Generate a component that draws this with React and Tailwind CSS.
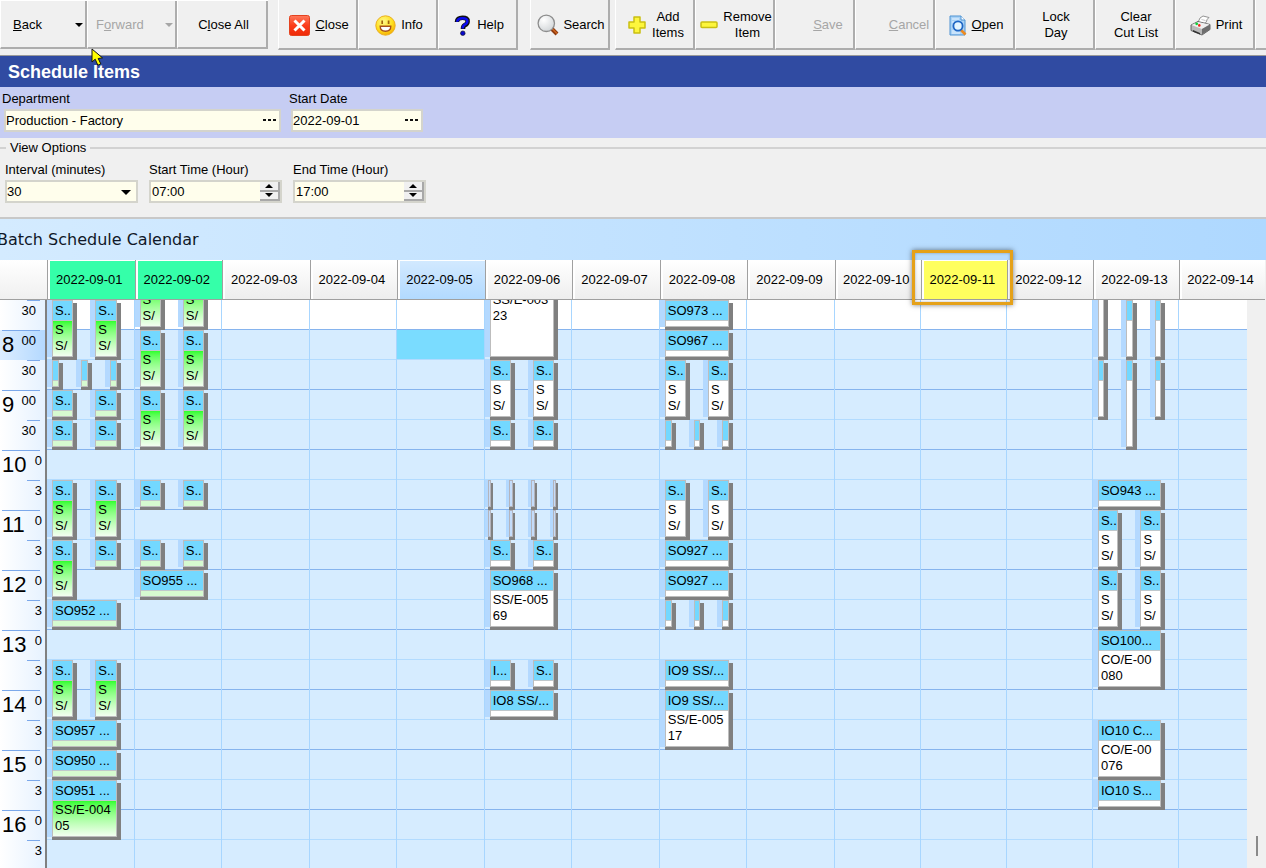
import React from "react";

const DAYS = Array.from({ length: 14 }, (_, i) => `2022-09-${String(i + 1).padStart(2, "0")}`);
const ROWS = Array.from({ length: 20 }, (_, i) => i);
const CALENDAR_GRID =
  "grid grid-cols-[47px_repeat(9,minmax(0,175fr))_repeat(5,minmax(0,172fr))]";

// Each booking: [half-hour row from 07:00, rows spanned, lane, lanes in the slot, title, detail lines]
const S = "S..";
const D = ["S", "S/"];
const EVENTS = {
  1: [
    [1, 2, 0, 2, S, D], [1, 2, 1, 2, S, D],
    [3, 1, 0, 3], [3, 1, 1, 3], [3, 1, 2, 3],
    [4, 1, 0, 2, S], [4, 1, 1, 2, S],
    [5, 1, 0, 2, S], [5, 1, 1, 2, S],
    [7, 2, 0, 2, S, D], [7, 2, 1, 2, S, D],
    [9, 2, 0, 2, S, D], [9, 1, 1, 2, S],
    [11, 1, 0, 1, "SO952 ..."],
    [13, 2, 0, 2, S, D], [13, 2, 1, 2, S, D],
    [15, 1, 0, 1, "SO957 ..."],
    [16, 1, 0, 1, "SO950 ..."],
    [17, 2, 0, 1, "SO951 ...", ["SS/E-004", "05"]],
  ],
  2: [
    [0, 2, 0, 2, "", D], [0, 2, 1, 2, "", D],
    [2, 2, 0, 2, S, D], [2, 2, 1, 2, S, D],
    [4, 2, 0, 2, S, D], [4, 2, 1, 2, S, D],
    [7, 1, 0, 2, S], [7, 1, 1, 2, S],
    [9, 1, 0, 2, S], [9, 1, 1, 2, S],
    [10, 1, 0, 1, "SO955 ..."],
  ],
  6: [
    [0, 3, 0, 1, "", ["SS/E-003", "23"]],
    [3, 2, 0, 2, S, D], [3, 2, 1, 2, S, D],
    [5, 1, 0, 2, S], [5, 1, 1, 2, S],
    [7, 1, 0, 4], [7, 1, 1, 4], [7, 1, 2, 4], [7, 1, 3, 4],
    [8, 1, 0, 4], [8, 1, 1, 4], [8, 1, 2, 4], [8, 1, 3, 4],
    [9, 1, 0, 2, S], [9, 1, 1, 2, S],
    [10, 2, 0, 1, "SO968 ...", ["SS/E-005", "69"]],
    [13, 1, 0, 2, "I..."], [13, 1, 1, 2, S],
    [14, 1, 0, 1, "IO8 SS/..."],
  ],
  8: [
    [1, 1, 0, 1, "SO973 ..."],
    [2, 1, 0, 1, "SO967 ..."],
    [3, 2, 0, 2, S, D], [3, 2, 1, 2, S, D],
    [5, 1, 0, 3], [5, 1, 1, 3], [5, 1, 2, 3],
    [7, 2, 0, 2, S, D], [7, 2, 1, 2, S, D],
    [9, 1, 0, 1, "SO927 ..."],
    [10, 1, 0, 1, "SO927 ..."],
    [11, 1, 0, 3], [11, 1, 1, 3], [11, 1, 2, 3],
    [13, 1, 0, 1, "IO9 SS/..."],
    [14, 2, 0, 1, "IO9 SS/...", ["SS/E-005", "17"]],
  ],
  13: [
    [0, 3, 0, 3], [1, 2, 1, 3], [1, 2, 2, 3],
    [3, 2, 0, 3], [3, 3, 1, 3], [3, 2, 2, 3],
    [7, 1, 0, 1, "SO943 ..."],
    [8, 2, 0, 2, S, D], [8, 2, 1, 2, S, D],
    [10, 2, 0, 2, S, D], [10, 2, 1, 2, S, D],
    [12, 2, 0, 1, "SO100...", ["CO/E-00", "080"]],
    [15, 2, 0, 1, "IO10 C...", ["CO/E-00", "076"]],
    [17, 1, 0, 1, "IO10 S..."],
  ],
};

function Booking({ data, green }) {
  const [row, span, lane, lanes, title, lines] = data;
  const unit = 12 / lanes;
  const place = {
    gridRow: `${row + 1} / span ${span}`,
    gridColumn: `${lane * unit + 1} / span ${unit}`,
  };
  if (lanes === 4) {
    return (
      <div className="z-10 flex min-w-0 pr-[13px]" style={place}>
        <div className="mb-[3px] w-[3px] shrink-0 bg-[#b4d9ff]" />
        <div className="mr-[2px] mb-[3px] min-w-0 flex-1 border border-[#b4b4bc] bg-[#c4dcfa] shadow-[0_3px_0_0_#808080,2px_3px_0_0_#808080]" />
      </div>
    );
  }
  const bodyColour = !green
    ? "bg-white"
    : span > 1
      ? "bg-linear-to-b from-[#2cff2c] to-[#f2fff0]"
      : "bg-[#d6fad0]";
  return (
    <div className="z-10 flex min-w-0 pr-[13px]" style={place}>
      <div className="mb-[3px] w-[5px] shrink-0 bg-[#b4d9ff]" />
      <div className="mr-[4px] mb-[3px] flex min-w-0 flex-1 flex-col overflow-hidden border border-[#bdbdbd] shadow-[0_3px_0_0_#808080,4px_3px_0_0_#808080]">
        <div className="h-5 shrink-0 border-b border-[#c0c8cc] bg-[#73d8ff] pl-[2px] leading-5 whitespace-nowrap">
          {title}
        </div>
        <div className={`flex-1 pt-px pl-[2px] leading-4 whitespace-nowrap ${bodyColour}`}>
          {lines && lines.map((l) => <div key={l}>{l}</div>)}
        </div>
      </div>
    </div>
  );
}

function DayColumn({ day }) {
  const green = day <= 2;
  return (
    <div className="grid grid-cols-12 grid-rows-[repeat(20,30px)] border-r border-[#a8d6ff]">
      {ROWS.map((r) => {
        const fill =
          day === 5 && r === 2 ? "bg-[#7adcff]" : r < 2 ? "bg-white" : "bg-[#d6ecff]";
        const line = r % 2 ? "border-[#86b4ee]" : "border-[#b2dbff]";
        return (
          <div
            key={r}
            className={`border-b ${line} ${fill}`}
            style={{ gridRow: r + 1, gridColumn: "1 / -1" }}
          />
        );
      })}
      {(EVENTS[day] || []).map((e) => (
        <Booking key={`${e[0]}-${e[2]}`} data={e} green={green} />
      ))}
    </div>
  );
}

function TimeRail() {
  return (
    <div className="border-r-2 border-[#808080] bg-linear-to-r from-white to-[#e6f2ff]">
      {ROWS.map((r) => {
        if (r === 0) return <div key={r} className="h-[30px]" />;
        const hour = 7 + Math.floor(r / 2);
        const wide = hour >= 10;
        const half = r % 2 === 1;
        return (
          <div
            key={r}
            className={`flex h-[30px] flex-col ${r === 2 ? "bg-linear-to-r from-[#dcedff] to-[#b4d9ff]" : ""}`}
          >
            <div className={`mr-[5px] h-px shrink-0 bg-[#7ba8ea] ${half ? "ml-[27px]" : "ml-[2px]"}`} />
            <div className={`flex justify-between pl-[2px] ${wide ? "pr-[3px]" : "pr-[9px]"}`}>
              <span className="text-[22px] leading-7">{half ? "" : hour}</span>
              <span className="text-[13px] leading-5">
                {half ? (wide ? "3" : "30") : wide ? "0" : "00"}
              </span>
            </div>
          </div>
        );
      })}
    </div>
  );
}

function ToolButton({ children, className = "w-20", disabled }) {
  return (
    <button
      type="button"
      disabled={disabled}
      className={`flex shrink-0 items-center justify-center border-r-2 border-b-2 border-l border-r-[#adadad] border-b-[#adadad] border-l-white pt-[2px] pl-[3px] leading-4 ${disabled ? "text-[#a6a6a6]" : ""} ${className}`}
    >
      {children}
    </button>
  );
}

const CloseIcon = () => (
  <svg width="21" height="21" viewBox="0 0 21 21" aria-hidden="true">
    <defs>
      <linearGradient id="red" x1="0" y1="0" x2="0" y2="1">
        <stop offset="0" stopColor="#ff7a5c" />
        <stop offset="0.5" stopColor="#fb3d1b" />
        <stop offset="1" stopColor="#ee2a08" />
      </linearGradient>
    </defs>
    <rect x="0.5" y="0.5" width="20" height="20" rx="2" fill="url(#red)" stroke="#e4421f" />
    <path d="M5.5 5.5l10 10M15.5 5.5l-10 10" stroke="#fff" strokeWidth="3" />
  </svg>
);

const SmileIcon = () => (
  <svg width="21" height="21" viewBox="0 0 21 21" aria-hidden="true">
    <defs>
      <radialGradient id="sun" cx="0.4" cy="0.3" r="0.75">
        <stop offset="0" stopColor="#fff98a" />
        <stop offset="0.6" stopColor="#ffe01e" />
        <stop offset="1" stopColor="#f5a800" />
      </radialGradient>
    </defs>
    <circle cx="10.5" cy="10.5" r="9.7" fill="url(#sun)" stroke="#eab020" />
    <path d="M7.2 5.5v3.5M13.6 5.5v3.5" fill="none" stroke="#a0640c" strokeWidth="1.7" />
    <path d="M5.2 11.2h10.6q0 5-5.3 5t-5.3-5z" fill="#fff" stroke="#a8501c" strokeWidth="1.4" />
  </svg>
);

const HelpIcon = () => (
  <svg width="17" height="21" viewBox="0 0 17 21" aria-hidden="true" fill="none">
    <path d="M3 7Q3 2.8 8.5 2.8T13.6 6.5Q13.6 8.8 10.8 10.2Q9 11 9 14" stroke="#111" strokeWidth="4.6" />
    <path d="M3.2 6.8Q3.4 3.2 8.5 3.2T13.3 6.5Q13.2 8.6 10.4 9.8Q8.6 10.8 8.6 13.6" stroke="#0a0af0" strokeWidth="2.6" />
    <circle cx="8.8" cy="18.2" r="2.3" fill="#0a0acc" stroke="#111" strokeWidth="0.6" />
  </svg>
);

const SearchIcon = () => (
  <svg width="22" height="22" viewBox="0 0 22 22" aria-hidden="true">
    <defs>
      <radialGradient id="lens" cx="0.35" cy="0.3" r="0.8">
        <stop offset="0" stopColor="#fff" />
        <stop offset="1" stopColor="#cfd3d6" />
      </radialGradient>
    </defs>
    <path d="M14.5 14.5l5.5 5.5" stroke="#8c3a10" strokeWidth="4" />
    <path d="M15 14.5l5 5" stroke="#d0661e" strokeWidth="1.5" />
    <circle cx="9.3" cy="9.3" r="8.2" fill="url(#lens)" stroke="#8d8d8d" strokeWidth="1.3" />
  </svg>
);

const PlusIcon = () => (
  <svg width="18" height="18" viewBox="0 0 18 18" aria-hidden="true">
    <path d="M6 1h6v5h5v6h-5v5H6v-5H1V6h5z" fill="#fdf63c" stroke="#c9bf12" strokeWidth="1.5" strokeLinejoin="round" />
  </svg>
);

const MinusIcon = () => (
  <svg width="18" height="8" viewBox="0 0 18 8" aria-hidden="true">
    <rect x="1" y="1" width="16" height="5.5" rx="1" fill="#fdf63c" stroke="#c9bf12" strokeWidth="1.5" />
  </svg>
);

const OpenIcon = () => (
  <svg width="18" height="21" viewBox="0 0 18 21" aria-hidden="true">
    <path d="M1 1h11l4 4v15H1z" fill="#a9d2f7" stroke="#4f93d2" />
    <path d="M12 1v4h4" fill="#fff" stroke="#4f93d2" />
    <path d="M3 4h7M3 7h2M3 16h4M3 18h8" stroke="#e8f4ff" />
    <path d="M12 15l4.5 4.5" stroke="#ee8a20" strokeWidth="2.6" />
    <circle cx="9" cy="11" r="4.6" fill="#e4f5ff" stroke="#1f66c4" strokeWidth="1.8" />
  </svg>
);

const PrintIcon = () => (
  <svg width="21" height="21" viewBox="0 0 21 21" aria-hidden="true">
    <path d="M7 7.5q2-1 3-4.5l3-2 6 1.5q-2 1-3 5l-4 2z" fill="#fff" stroke="#888" strokeWidth="0.9" />
    <path d="M11.5 4.5l4 1" stroke="#bbb" strokeWidth="0.8" />
    <path d="M1 10l7-3.5 12 3v5l-8 5.5-11-4.5z" fill="#b9b9b9" stroke="#5a5a5a" strokeWidth="0.9" />
    <path d="M1.5 10l6.500-3 11.500 2.500-7.500 4.500z" fill="#efefef" />
    <path d="M12 14l8-4.500v5l-8 5z" fill="#6e6e6e" />
    <path d="M3 15l7 3v1.500l-7-2.800z" fill="#333" />
    <circle cx="6.700" cy="8.800" r="1.400" fill="#12d23a" />
    <circle cx="9.300" cy="10.400" r="1.300" fill="#f0251a" />
  </svg>
);

const Caret = ({ up }) => (
  <svg width="8" height="4" viewBox="0 0 8 4" aria-hidden="true" fill="currentColor">
    <path d={up ? "M4 0l4 4H0z" : "M0 0h8L4 4z"} />
  </svg>
);

function Toolbar() {
  return (
    <div className="flex h-14 shrink-0 overflow-hidden border-b border-[#9a9a9a] bg-[#f0f0f0] pb-[5px]">
      <div className="mr-[10px] mb-px flex border-t border-white">
        <ToolButton className="w-[87px]">
          <span className="ml-[9px] flex-1 text-left"><u>B</u>ack</span>
          <span className="mr-[2px]"><Caret /></span>
        </ToolButton>
        <ToolButton className="w-[90px]" disabled>
          <span className="ml-[5px] flex-1 text-left">F<u>o</u>rward</span>
          <span className="mr-[2px]"><Caret /></span>
        </ToolButton>
        <ToolButton className="w-[91px]">C<u>l</u>ose All</ToolButton>
      </div>
      <div className="mr-3 flex">
        <ToolButton><span className="mr-[5px]"><CloseIcon /></span><span><u>C</u>lose</span></ToolButton>
        <ToolButton><span className="mr-[5px]"><SmileIcon /></span>Info</ToolButton>
        <ToolButton><span className="mr-[6px]"><HelpIcon /></span>Help</ToolButton>
      </div>
      <div className="mr-[5px] flex">
        <ToolButton><span className="mr-[4px]"><SearchIcon /></span>Search</ToolButton>
      </div>
      <div className="flex">
        <ToolButton><span className="mr-[6px]"><PlusIcon /></span>Add<br />Items</ToolButton>
        <ToolButton><span className="mr-[5px]"><MinusIcon /></span>Remove<br />Item</ToolButton>
        <ToolButton disabled><span className="ml-[24px]"><u>S</u>ave</span></ToolButton>
        <ToolButton disabled><span className="ml-[26px]"><u>C</u>ancel</span></ToolButton>
        <ToolButton><span className="mr-[5px]"><OpenIcon /></span><span><u>O</u>pen</span></ToolButton>
        <ToolButton>Lock<br />Day</ToolButton>
        <ToolButton>Clear<br />Cut List</ToolButton>
        <ToolButton><span className="mr-[5px]"><PrintIcon /></span>Print</ToolButton>
        <ToolButton />
      </div>
    </div>
  );
}

const FIELD = "flex h-[23px] border-2 border-[#d4d4cc] bg-[#fffeec]";

function LookupField({ id, label, value, width }) {
  return (
    <div>
      <label htmlFor={id} className="-ml-[2px] block h-[22px] leading-6">{label}</label>
      <div className={`${FIELD} ${width}`}>
        <input id={id} defaultValue={value} className="min-w-0 flex-1 bg-transparent outline-none" />
        <button type="button" aria-label={`Choose ${label}`} className="flex w-5 items-center justify-center">
          <svg width="13" height="3" viewBox="0 0 13 3" aria-hidden="true">
            <path d="M0 0h3v2H0zM5 0h3v2H5zM10 0h3v2h-3z" fill="#111" />
          </svg>
        </button>
      </div>
    </div>
  );
}

function SpinField({ id, label, value }) {
  const btn = "flex flex-1 items-center justify-center border-r-2 border-b-2 border-[#a8a8a8] bg-[#f0f0f0]";
  return (
    <div>
      <label htmlFor={id} className="block leading-5">{label}</label>
      <div className={`${FIELD} w-[133px]`}>
        <input id={id} defaultValue={value} className="min-w-0 flex-1 bg-transparent pl-px outline-none" />
        <div className="flex w-5 flex-col">
          <button type="button" aria-label={`Increase ${label}`} className={btn}><Caret up /></button>
          <button type="button" aria-label={`Decrease ${label}`} className={btn}><Caret /></button>
        </div>
      </div>
    </div>
  );
}

function ViewOptions() {
  return (
    <fieldset className="h-[79px] min-w-0 border-t-2 border-[#d2d2d2] pl-[5px]">
      <legend className="ml-px px-[4px] leading-[19px]">View Options</legend>
      <div className="flex gap-[11px] pt-[3px]">
        <div>
          <label htmlFor="interval" className="block leading-5">Interval (minutes)</label>
          <div className={`${FIELD} relative w-[133px]`}>
            <select id="interval" defaultValue="30" className="min-w-0 flex-1 appearance-none bg-transparent outline-none">
              <option>15</option>
              <option>30</option>
              <option>60</option>
            </select>
            <span className="pointer-events-none absolute top-2 right-[5px]">
              <svg width="10" height="5" viewBox="0 0 10 5" aria-hidden="true"><path d="M0 0h10L5 5z" /></svg>
            </span>
          </div>
        </div>
        <SpinField id="start" label="Start Time (Hour)" value="07:00" />
        <SpinField id="end" label="End Time (Hour)" value="17:00" />
      </div>
    </fieldset>
  );
}

function DayHeader() {
  return (
    <div className={`${CALENDAR_GRID} h-10 shrink-0 pr-px`}>
      <div className="border-b border-[#a0a0a0] bg-linear-to-b from-white to-[#f0f0f0]" />
      {DAYS.map((d, i) => {
        const fill =
          i < 2
            ? "bg-[#35ffa9]"
            : i === 4
              ? "bg-linear-to-b from-[#d2e9ff] to-[#b2daff]"
              : i === 10
                ? "bg-[#ffff5e]"
                : "bg-linear-to-b from-white to-[#eeeeee]";
        return (
          <div key={d} className="relative flex border-b border-l border-[#a0a0a0]">
            <div className={`flex flex-1 items-center justify-center border-t border-l-2 border-white pr-[6px] ${fill}`}>
              {d}
            </div>
            {i === 10 && (
              <div className="absolute -top-[10px] -right-[6px] -bottom-[6px] -left-[10px] z-20 border-3 border-[#e5a119] shadow-[0_0_5px_rgba(0,0,0,0.5),inset_0_0_3px_rgba(0,0,0,0.3)]" />
            )}
          </div>
        );
      })}
    </div>
  );
}

export default function App() {
  return (
    <div className="relative flex h-screen flex-col overflow-hidden bg-[#f0f0f0] font-['Liberation_Sans',Arial,sans-serif] text-[13px] text-black">
      <Toolbar />
      <svg className="absolute top-[48px] left-[91px] z-30" width="14" height="20" viewBox="0 0 14 20" aria-hidden="true">
        <path d="M1 1v13l3.2-2.8 2.6 6 3-1.3-2.6-5.4 4.3-.6z" fill="#ffff00" stroke="#111" />
      </svg>
      <h1 className="h-[31px] shrink-0 bg-[#304ba2] pl-[8px] text-[18px] leading-8 font-bold text-white">
        Schedule Items
      </h1>
      <div className="flex h-[51px] shrink-0 gap-[10px] bg-[#c6cdf3] pl-[4px]">
        <LookupField id="department" label="Department" value="Production - Factory" width="w-[277px]" />
        <LookupField id="date" label="Start Date" value="2022-09-01" width="w-[132px]" />
      </div>
      <div className="h-[81px] shrink-0 border-b-2 border-[#c8c8c8]">
        <ViewOptions />
      </div>
      <h2 className="h-[41px] shrink-0 bg-linear-to-r from-[#d4ebff] to-[#aed8ff] font-['DejaVu_Sans',Verdana,sans-serif] text-[16px] leading-[42px] whitespace-nowrap text-[#101828]">
        <span className="-ml-[3px]">Batch Schedule Calendar</span>
      </h2>
      <DayHeader />
      <div className="relative min-h-0 flex-1 overflow-hidden">
        <div className={`${CALENDAR_GRID} -mt-[30px] pr-px`}>
          <TimeRail />
          {DAYS.map((d, i) => (
            <DayColumn key={d} day={i + 1} />
          ))}
        </div>
        <div className="absolute inset-y-0 right-0 z-10 flex w-[19px] items-end justify-center bg-[#f0f0f0] pb-3">
          <div className="h-5 w-[2px] bg-[#8a8a8a]" />
        </div>
      </div>
    </div>
  );
}
